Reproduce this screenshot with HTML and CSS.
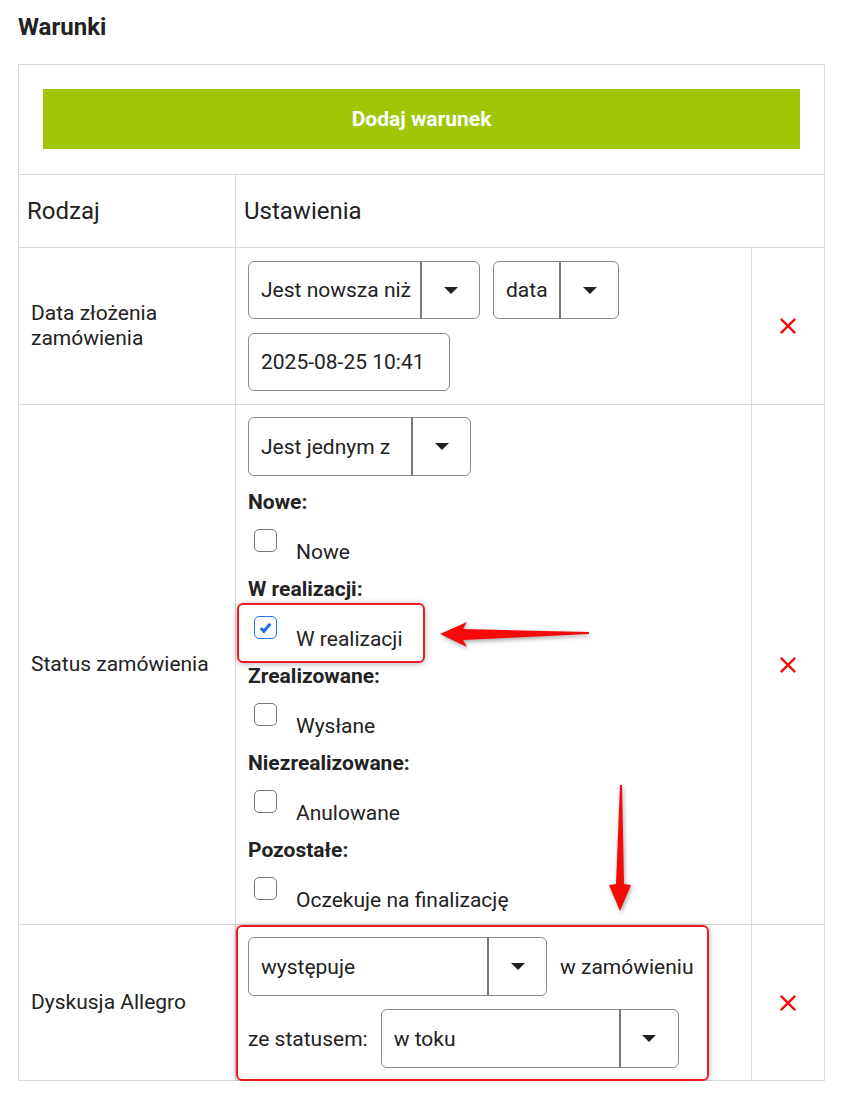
FILE: index.html
```html
<!DOCTYPE html>
<html lang="pl">
<head>
  <meta charset="UTF-8">
  <title>Warunki</title>
  <link rel="stylesheet" href="styles.css">
</head>
<body>
  <div class="page">
    <h2>Warunki</h2>

    <table class="conditions">
      <colgroup>
        <col class="col-kind">
        <col class="col-settings">
        <col class="col-remove">
      </colgroup>
      <tr>
        <td colspan="3" class="add-cell"><button class="add-btn">Dodaj warunek</button></td>
      </tr>
      <tr class="head">
        <th>Rodzaj</th>
        <th colspan="2">Ustawienia</th>
      </tr>

      <!-- data zlozenia -->
      <tr>
        <td class="kind">Data złożenia zamówienia</td>
        <td class="settings">
          <div class="line wrap">
            <div class="select short"><span class="value w-173">Jest nowsza niż</span><span class="caret"></span></div>
            <div class="select short"><span class="value w-67">data</span><span class="caret"></span></div>
            <div class="input">2025-08-25 10:41</div>
          </div>
        </td>
        <td class="remove"><svg class="x" viewBox="0 0 20 20"><path d="M2 2L18 18M18 2L2 18"/></svg></td>
      </tr>

      <!-- status -->
      <tr>
        <td class="kind">Status zamówienia</td>
        <td class="settings status">
          <div class="select"><span class="value w-164">Jest jednym z</span><span class="caret"></span></div>

          <div class="group">Nowe:</div>
          <label class="option"><span class="box"></span><span class="text">Nowe</span></label>

          <div class="group">W realizacji:</div>
          <label class="option"><span class="box checked"><svg viewBox="0 0 16 16"><path d="M3.5 8.5L6.5 11.5L12.5 4.5"/></svg></span><span class="text">W realizacji</span></label>

          <div class="group">Zrealizowane:</div>
          <label class="option"><span class="box"></span><span class="text">Wysłane</span></label>

          <div class="group">Niezrealizowane:</div>
          <label class="option"><span class="box"></span><span class="text">Anulowane</span></label>

          <div class="group">Pozostałe:</div>
          <label class="option"><span class="box"></span><span class="text">Oczekuje na finalizację</span></label>
        </td>
        <td class="remove"><svg class="x" viewBox="0 0 20 20"><path d="M2 2L18 18M18 2L2 18"/></svg></td>
      </tr>

      <!-- dyskusja -->
      <tr>
        <td class="kind">Dyskusja Allegro</td>
        <td class="settings discussion">
          <div class="line">
            <div class="select"><span class="value w-240">występuje</span><span class="caret"></span></div>
            <span>w zamówieniu</span>
          </div>
          <div class="line second">
            <span>ze statusem:</span>
            <div class="select"><span class="value w-239">w toku</span><span class="caret"></span></div>
          </div>
        </td>
        <td class="remove"><svg class="x" viewBox="0 0 20 20"><path d="M2 2L18 18M18 2L2 18"/></svg></td>
      </tr>
    </table>
  </div>

  <!-- annotations -->
  <div class="mark mark-status"></div>
  <div class="mark mark-discussion"></div>
  <svg class="arrows" viewBox="0 0 845 1100">
    <polygon points="440,634 467,622 463,629 589,632 589,634 463,640 467,647"/>
    <polygon points="620,785 622,785 624,884 631,885 620,911 609,885 616,884"/>
  </svg>
</body>
</html>
```

FILE: styles.css
```css
body {
  margin: 0;
  font-family: Roboto, "Liberation Sans", Arial, sans-serif;
  color: #222;
  background: #fff;
  position: relative;
}
.page {
  padding: 13px 20px 0 18px;
}
h2 {
  margin: 0 0 22px;
  font-size: 24px;
  line-height: 29px;
  font-weight: 700;
}
.conditions {
  width: 806px;
  border-collapse: collapse;
  table-layout: fixed;
  font-size: 21px;
}
.col-kind { width: 217px; }
.col-settings { width: 516px; }
.col-remove { width: 73px; }
.conditions td, .conditions th {
  border: 1px solid #dadada;
  padding: 0;
  vertical-align: middle;
}
.add-cell {
  padding: 24px 24px 25px !important;
}
.add-btn {
  display: block;
  width: 100%;
  height: 60px;
  border: none;
  background: #a0c605;
  color: #fff;
  font-family: inherit;
  font-size: 21px;
  font-weight: 700;
  cursor: pointer;
}
.head th {
  height: 72px;
  text-align: left;
  font-weight: 400;
  font-size: 24px;
  padding-left: 8px;
}
.kind {
  padding: 0 12px !important;
  line-height: 25px;
}
.settings {
  padding: 13px 12px !important;
}
.status {
  padding: 12px 12px 0 !important;
}
.discussion {
  padding: 12px !important;
}
.line {
  display: flex;
  align-items: center;
  gap: 13px;
}
.line.wrap {
  flex-wrap: wrap;
  row-gap: 14px;
}
.line.second {
  margin-top: 13px;
}
.select {
  display: inline-flex;
  height: 59px;
  box-sizing: border-box;
  border: 1px solid #8a8a8a;
  border-radius: 6px;
  background: #fff;
}
.select.short {
  height: 58px;
}
.select .value {
  display: flex;
  align-items: center;
  padding-left: 12px;
  border-right: 2px solid #7a7a7a;
  box-sizing: border-box;
  white-space: nowrap;
}
.w-173 { width: 173px; }
.w-67 { width: 67px; }
.w-164 { width: 164px; }
.w-240 { width: 240px; }
.w-239 { width: 239px; }
.select .caret {
  width: 57px;
  display: flex;
  align-items: center;
  justify-content: center;
}
.select .caret::after {
  content: "";
  border-left: 7px solid transparent;
  border-right: 7px solid transparent;
  border-top: 7px solid #222;
}
.input {
  width: 202px;
  height: 58px;
  box-sizing: border-box;
  border: 1px solid #8a8a8a;
  border-radius: 6px;
  padding-left: 12px;
  display: flex;
  align-items: center;
}
.group {
  font-weight: 700;
  line-height: 24px;
  height: 24px;
  position: relative;
  top: 1px;
}
.status .select {
  margin-bottom: 13px;
}
.option {
  display: flex;
  align-items: flex-start;
  height: 63px;
}
.option .box {
  width: 23px;
  height: 23px;
  box-sizing: border-box;
  margin: 16px 0 0 6px;
  border: 1px solid #767676;
  border-radius: 5px;
  background: #fff;
}
.option .box.checked {
  border-color: #1f7ae8;
  display: flex;
  align-items: center;
  justify-content: center;
}
.option .box svg {
  width: 17px;
  height: 17px;
  fill: none;
  stroke: #1a6fe6;
  stroke-width: 2.8;
}
.option .text {
  margin: 27px 0 0 19px;
  line-height: 25px;
}
.remove {
  text-align: center;
}
.x {
  width: 18px;
  height: 18px;
  display: block;
  margin: 0 auto;
  fill: none;
  stroke: #f20d0d;
  stroke-width: 2.6;
}
.mark {
  position: absolute;
  border: 2px solid #ee1b24;
  border-radius: 6px;
  box-shadow: 0 1px 6px rgba(0, 0, 0, 0.3);
  box-sizing: border-box;
}
.mark-status {
  left: 237px;
  top: 603px;
  width: 188px;
  height: 60px;
}
.mark-discussion {
  left: 236px;
  top: 925px;
  width: 473px;
  height: 156px;
}
.arrows {
  position: absolute;
  left: 0;
  top: 0;
  width: 845px;
  height: 1100px;
  pointer-events: none;
  fill: #f50a0a;
  filter: drop-shadow(1px 2px 2px rgba(0, 0, 0, 0.35));
}
```
